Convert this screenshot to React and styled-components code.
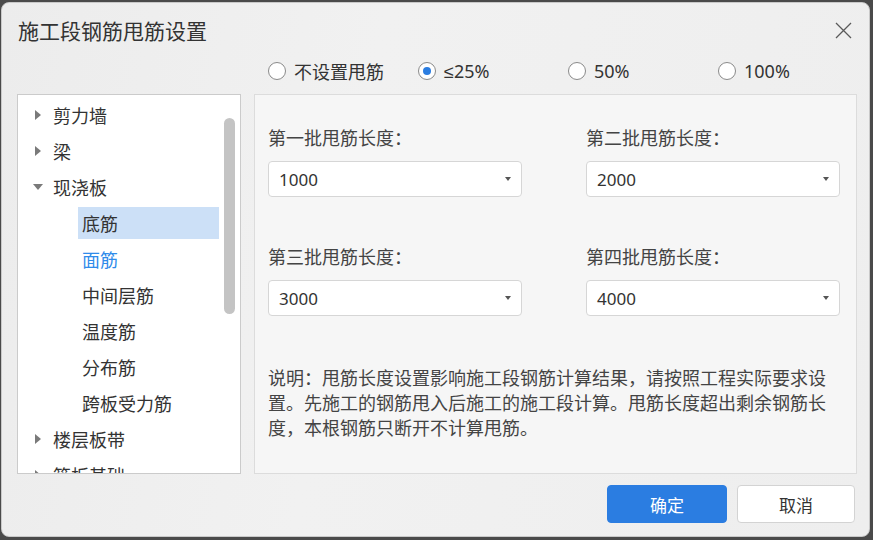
import React, { useState } from 'react';
import styled, { createGlobalStyle, css } from 'styled-components';

const GlobalStyle = createGlobalStyle`
  html, body {
    margin: 0;
    padding: 0;
    background: #4a4a4a;
  }
  body {
    font-family: "Noto Sans", "Noto Sans CJK SC", sans-serif;
    color: #333;
  }
`;

const Page = styled.div`
  padding: 2px 0 0 1px;
`;

const Dialog = styled.div`
  width: 869px;
  height: 535px;
  box-sizing: border-box;
  display: flex;
  flex-direction: column;
  border-radius: 8px;
  background: linear-gradient(100deg, #ececec 0%, #f1f1f1 40%, #eeeeee 100%);
  border: 1px solid #c9c9c9;
  overflow: hidden;
`;

const TitleBar = styled.div`
  height: 49px;
  box-sizing: border-box;
  display: flex;
  align-items: flex-start;
  justify-content: space-between;
  padding: 16px 16px 0 16px;
`;

const Title = styled.div`
  font-size: 21px;
  line-height: 24px;
  color: #333;
`;

const CloseButton = styled.button`
  width: 19px;
  height: 19px;
  padding: 0;
  margin-top: 2px;
  border: none;
  background: transparent;
  display: flex;
  align-items: center;
  justify-content: center;
  cursor: pointer;
`;

const Body = styled.div`
  display: grid;
  grid-template-columns: 224px 603px;
  grid-template-rows: 38px 380px;
  column-gap: 13px;
  row-gap: 4px;
  padding: 0 15px 0 15px;
`;

const RadioRow = styled.div`
  grid-column: 2;
  display: grid;
  grid-template-columns: repeat(4, 150px);
  align-items: center;
  padding-left: 14px;
`;

const RadioOption = styled.label`
  display: flex;
  align-items: center;
  gap: 8px;
  font-family: "Noto Sans", "Liberation Sans", "Noto Sans CJK SC", sans-serif;
  font-size: 18px;
  color: #333;
  cursor: pointer;
`;

const RadioCircle = styled.span`
  width: 18px;
  height: 18px;
  box-sizing: border-box;
  border-radius: 50%;
  border: 1px solid #8a8a8a;
  background: #fff;
  display: flex;
  align-items: center;
  justify-content: center;
  ${({ $checked }) =>
    $checked &&
    css`
      &::after {
        content: '';
        width: 8px;
        height: 8px;
        border-radius: 50%;
        background: #2b7de1;
      }
    `}
`;

const TreePanel = styled.div`
  position: relative;
  box-sizing: border-box;
  background: #fff;
  border: 1px solid #cbcbcb;
  overflow: hidden;
  padding-top: 4px;
`;

const TreeRow = styled.div`
  height: 32px;
  margin-bottom: 4px;
  display: flex;
  align-items: center;
  font-size: 18px;
  color: ${({ $active }) => ($active ? '#2f8bea' : '#333')};
  ${({ $child }) =>
    $child
      ? css`
          margin-left: 60px;
          width: 141px;
          padding-left: 4px;
          box-sizing: border-box;
        `
      : css`
          padding-left: 16px;
        `}
  background: ${({ $selected }) => ($selected ? '#cce0f7' : 'transparent')};
`;

const Arrow = styled.span`
  width: 19px;
  display: flex;
  align-items: center;
  justify-content: flex-start;
  &::before {
    content: '';
    border-style: solid;
    ${({ $open }) =>
      $open
        ? css`
            margin-left: -1px;
            border-width: 6px 5px 0 5px;
            border-color: #7a7a7a transparent transparent transparent;
          `
        : css`
            margin-left: 1px;
            border-width: 5px 0 5px 6px;
            border-color: transparent transparent transparent #7a7a7a;
          `}
  }
`;

const ScrollThumb = styled.div`
  position: absolute;
  top: 23px;
  right: 5px;
  width: 11px;
  height: 196px;
  border-radius: 6px;
  background: #c4c4c4;
`;

const SettingsPanel = styled.div`
  box-sizing: border-box;
  background: #f6f6f6;
  border: 1px solid #dcdcdc;
  padding: 31px 16px 0 13px;
`;

const FieldGrid = styled.div`
  display: grid;
  grid-template-columns: 254px 254px;
  column-gap: 64px;
  row-gap: 48px;
`;

const Field = styled.div`
  display: flex;
  flex-direction: column;
  gap: 11px;
`;

const FieldLabel = styled.div`
  font-size: 18px;
  line-height: 24px;
  color: #444;
`;

const Select = styled.div`
  height: 36px;
  box-sizing: border-box;
  display: flex;
  align-items: center;
  justify-content: space-between;
  padding: 0 10px 0 10px;
  background: #fff;
  border: 1px solid #d6d6d6;
  border-radius: 4px;
  font-size: 17px;
  color: #333;
  &::after {
    content: '';
    border-style: solid;
    border-width: 4px 3.5px 0 3.5px;
    border-color: #555 transparent transparent transparent;
  }
`;

const Note = styled.p`
  margin: 50px 0 0 0;
  width: 572px;
  font-size: 18px;
  line-height: 25px;
  color: #444;
`;

const Footer = styled.div`
  display: flex;
  justify-content: flex-end;
  gap: 10px;
  padding: 11px 14px 0 0;
`;

const Button = styled.button`
  height: 38px;
  width: ${({ $width }) => $width}px;
  box-sizing: border-box;
  border-radius: 4px;
  font-family: inherit;
  font-size: 17px;
  cursor: pointer;
  ${({ $primary }) =>
    $primary
      ? css`
          background: #2b7de1;
          border: 1px solid #2b7de1;
          color: #fff;
        `
      : css`
          background: #fff;
          border: 1px solid #d3d3d3;
          color: #333;
        `}
`;

const RADIOS = ['不设置甩筋', '≤25%', '50%', '100%'];

const TREE = [
  { label: '剪力墙', arrow: 'closed' },
  { label: '梁', arrow: 'closed' },
  { label: '现浇板', arrow: 'open' },
  { label: '底筋', child: true, selected: true },
  { label: '面筋', child: true, active: true },
  { label: '中间层筋', child: true },
  { label: '温度筋', child: true },
  { label: '分布筋', child: true },
  { label: '跨板受力筋', child: true },
  { label: '楼层板带', arrow: 'closed' },
  { label: '筏板基础', arrow: 'closed' }
];

const FIELDS = [
  { label: '第一批甩筋长度：', value: '1000' },
  { label: '第二批甩筋长度：', value: '2000' },
  { label: '第三批甩筋长度：', value: '3000' },
  { label: '第四批甩筋长度：', value: '4000' }
];

const CloseIcon = () => (
  <svg width="17" height="17" viewBox="0 0 17 17">
    <path d="M1 1L16 16M16 1L1 16" stroke="#5a5a5a" strokeWidth="1.3" fill="none" />
  </svg>
);

export default function App() {
  const [ratio, setRatio] = useState(1);

  return (
    <Page>
      <GlobalStyle />
      <Dialog>
        <TitleBar>
          <Title>施工段钢筋甩筋设置</Title>
          <CloseButton>
            <CloseIcon />
          </CloseButton>
        </TitleBar>
        <Body>
          <RadioRow>
            {RADIOS.map((label, i) => (
              <RadioOption key={label} onClick={() => setRatio(i)}>
                <RadioCircle $checked={ratio === i} />
                {label}
              </RadioOption>
            ))}
          </RadioRow>
          <TreePanel>
            {TREE.map(({ label, arrow, child, selected, active }) => (
              <TreeRow key={label} $child={child} $selected={selected} $active={active}>
                {arrow && <Arrow $open={arrow === 'open'} />}
                {label}
              </TreeRow>
            ))}
            <ScrollThumb />
          </TreePanel>
          <SettingsPanel>
            <FieldGrid>
              {FIELDS.map(({ label, value }) => (
                <Field key={label}>
                  <FieldLabel>{label}</FieldLabel>
                  <Select>{value}</Select>
                </Field>
              ))}
            </FieldGrid>
            <Note>
              说明：甩筋长度设置影响施工段钢筋计算结果，请按照工程实际要求设置。先施工的钢筋甩入后施工的施工段计算。甩筋长度超出剩余钢筋长度，本根钢筋只断开不计算甩筋。
            </Note>
          </SettingsPanel>
        </Body>
        <Footer>
          <Button $primary $width={120}>确定</Button>
          <Button $width={118}>取消</Button>
        </Footer>
      </Dialog>
    </Page>
  );
}
